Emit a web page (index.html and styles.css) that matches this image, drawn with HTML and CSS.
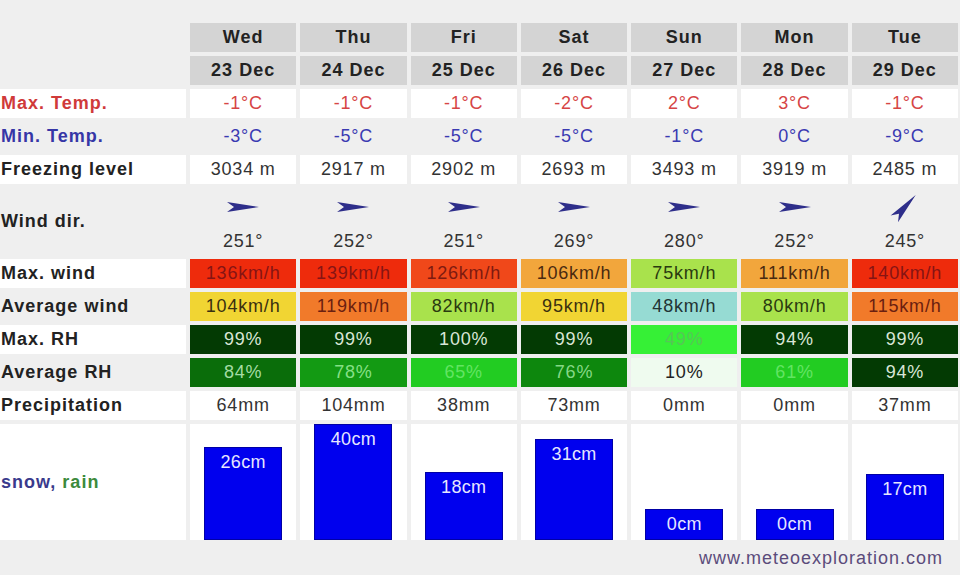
FILE: index.html
```html
<!DOCTYPE html>
<html lang="en">
<head>
    <meta charset="UTF-8">
    <title>Snow forecast</title>
    <link rel="stylesheet" href="styles.css">
</head>
<body>
    <div class="forecast">
        <div class="row head">
            <div></div>
            <div class="cell day">Wed</div>
            <div class="cell day">Thu</div>
            <div class="cell day">Fri</div>
            <div class="cell day">Sat</div>
            <div class="cell day">Sun</div>
            <div class="cell day">Mon</div>
            <div class="cell day">Tue</div>
        </div>
        <div class="row head">
            <div></div>
            <div class="cell day">23 Dec</div>
            <div class="cell day">24 Dec</div>
            <div class="cell day">25 Dec</div>
            <div class="cell day">26 Dec</div>
            <div class="cell day">27 Dec</div>
            <div class="cell day">28 Dec</div>
            <div class="cell day">29 Dec</div>
        </div>

        <div class="row white tmax">
            <div class="label">Max. Temp.</div>
            <div class="cell">-1°C</div>
            <div class="cell">-1°C</div>
            <div class="cell">-1°C</div>
            <div class="cell">-2°C</div>
            <div class="cell">2°C</div>
            <div class="cell">3°C</div>
            <div class="cell">-1°C</div>
        </div>
        <div class="row tmin">
            <div class="label">Min. Temp.</div>
            <div class="cell">-3°C</div>
            <div class="cell">-5°C</div>
            <div class="cell">-5°C</div>
            <div class="cell">-5°C</div>
            <div class="cell">-1°C</div>
            <div class="cell">0°C</div>
            <div class="cell">-9°C</div>
        </div>
        <div class="row white">
            <div class="label">Freezing level</div>
            <div class="cell">3034 m</div>
            <div class="cell">2917 m</div>
            <div class="cell">2902 m</div>
            <div class="cell">2693 m</div>
            <div class="cell">3493 m</div>
            <div class="cell">3919 m</div>
            <div class="cell">2485 m</div>
        </div>

        <div class="row wind">
            <div class="label">Wind dir.</div>
            <div class="cell dir"><svg class="arrow" viewBox="0 0 34 12"><path d="M1 1 L33 6 L1 11 L8 6 Z"/></svg><span>251°</span></div>
            <div class="cell dir"><svg class="arrow" viewBox="0 0 34 12"><path d="M1 1 L33 6 L1 11 L8 6 Z"/></svg><span>252°</span></div>
            <div class="cell dir"><svg class="arrow" viewBox="0 0 34 12"><path d="M1 1 L33 6 L1 11 L8 6 Z"/></svg><span>251°</span></div>
            <div class="cell dir"><svg class="arrow" viewBox="0 0 34 12"><path d="M1 1 L33 6 L1 11 L8 6 Z"/></svg><span>269°</span></div>
            <div class="cell dir"><svg class="arrow" viewBox="0 0 34 12"><path d="M1 1 L33 6 L1 11 L8 6 Z"/></svg><span>280°</span></div>
            <div class="cell dir"><svg class="arrow" viewBox="0 0 34 12"><path d="M1 1 L33 6 L1 11 L8 6 Z"/></svg><span>252°</span></div>
            <div class="cell dir"><svg class="arrow" viewBox="0 0 34 12" style="transform: rotate(-48deg)"><path d="M1 1 L33 6 L1 11 L8 6 Z"/></svg><span>245°</span></div>
        </div>

        <div class="row white">
            <div class="label">Max. wind</div>
            <div class="cell w-red">136km/h</div>
            <div class="cell w-red">139km/h</div>
            <div class="cell w-redorange">126km/h</div>
            <div class="cell w-amber">106km/h</div>
            <div class="cell w-lime">75km/h</div>
            <div class="cell w-amber">111km/h</div>
            <div class="cell w-red">140km/h</div>
        </div>
        <div class="row">
            <div class="label">Average wind</div>
            <div class="cell w-yellow">104km/h</div>
            <div class="cell w-orange">119km/h</div>
            <div class="cell w-lime">82km/h</div>
            <div class="cell w-yellow">95km/h</div>
            <div class="cell w-teal">48km/h</div>
            <div class="cell w-lime">80km/h</div>
            <div class="cell w-orange">115km/h</div>
        </div>
        <div class="row white">
            <div class="label">Max. RH</div>
            <div class="cell rh-90">99%</div>
            <div class="cell rh-90">99%</div>
            <div class="cell rh-90">100%</div>
            <div class="cell rh-90">99%</div>
            <div class="cell rh-40">49%</div>
            <div class="cell rh-90">94%</div>
            <div class="cell rh-90">99%</div>
        </div>
        <div class="row">
            <div class="label">Average RH</div>
            <div class="cell rh-80">84%</div>
            <div class="cell rh-70">78%</div>
            <div class="cell rh-60">65%</div>
            <div class="cell rh-75">76%</div>
            <div class="cell rh-10">10%</div>
            <div class="cell rh-60">61%</div>
            <div class="cell rh-90">94%</div>
        </div>
        <div class="row white">
            <div class="label">Precipitation</div>
            <div class="cell">64mm</div>
            <div class="cell">104mm</div>
            <div class="cell">38mm</div>
            <div class="cell">73mm</div>
            <div class="cell">0mm</div>
            <div class="cell">0mm</div>
            <div class="cell">37mm</div>
        </div>

        <div class="row white snow">
            <div class="label"><span><span class="snow-txt">snow,</span> <span class="rain-txt">rain</span></span></div>
            <div class="cell bars"><div class="bar" style="height: 93px">26cm</div></div>
            <div class="cell bars"><div class="bar" style="height: 116px">40cm</div></div>
            <div class="cell bars"><div class="bar" style="height: 68px">18cm</div></div>
            <div class="cell bars"><div class="bar" style="height: 101px">31cm</div></div>
            <div class="cell bars"><div class="bar" style="height: 31px">0cm</div></div>
            <div class="cell bars"><div class="bar" style="height: 31px">0cm</div></div>
            <div class="cell bars"><div class="bar" style="height: 66px">17cm</div></div>
        </div>
    </div>

    <div class="credit">www.meteoexploration.com</div>
</body>
</html>
```

FILE: styles.css
```css
body {
    margin: 0;
    padding-top: 23px;
    width: 960px;
    background-color: #efefef;
    font-family: "Liberation Sans", Arial, sans-serif;
    font-size: 18px;
    letter-spacing: 0.8px;
    color: #333;
    overflow: hidden;
}

.forecast {
    display: flex;
    flex-direction: column;
    gap: 4px;
    width: 958px;
}

.row {
    display: grid;
    grid-template-columns: 186px repeat(7, 1fr);
    column-gap: 4px;
    height: 29px;
}

.white > div {
    background-color: #fff;
}

.label {
    padding-left: 1px;
    font-weight: bold;
    color: #222;
    letter-spacing: 1px;
    display: flex;
    align-items: center;
}

.cell {
    display: flex;
    align-items: center;
    justify-content: center;
}

.head .day {
    background-color: #d4d4d4;
    font-weight: bold;
    color: #222;
    letter-spacing: 1px;
}

/* temperatures */
.tmax .label { color: #d03a3a; }
.tmax .cell { color: #d64545; }
.tmin .label { color: #3636a6; }
.tmin .cell { color: #3a3ab2; }

/* wind direction */
.row.wind {
    height: 67px;
}

.dir {
    flex-direction: column;
    justify-content: flex-start;
    padding-top: 13px;
}

.arrow {
    display: block;
    width: 34px;
    height: 12px;
    fill: #2e2e8a;
}

.dir span {
    margin-top: 17px;
    line-height: 22px;
}

/* wind speed colours */
.row .w-red { background-color: #ee2b0c; color: #861414; }
.row .w-redorange { background-color: #f0481a; color: #7e1a10; }
.row .w-amber { background-color: #f2a63c; color: #4a2a10; }
.row .w-orange { background-color: #f17a2a; color: #6a2010; }
.row .w-yellow { background-color: #f1d533; color: #3a3010; }
.row .w-lime { background-color: #a9e24c; color: #2a3a10; }
.row .w-teal { background-color: #96dbd3; color: #233; }

/* humidity colours */
.row .rh-90 { background-color: #033a03; color: #d9e6d6; }
.row .rh-80 { background-color: #0a6d0a; color: #a4dca4; }
.row .rh-75 { background-color: #0d870d; color: #86d886; }
.row .rh-70 { background-color: #139a13; color: #86e086; }
.row .rh-60 { background-color: #22cc22; color: #62e462; }
.row .rh-40 { background-color: #36f036; color: #56c656; }
.row .rh-10 { background-color: #effbef; color: #222; }

/* snow bars */
.row.snow {
    height: 116px;
}

.snow-txt { color: #3a3a8c; }
.rain-txt { color: #3c8a3c; }

.bars {
    align-items: flex-end;
}

.bar {
    box-sizing: border-box;
    width: 78px;
    padding-top: 4px;
    line-height: 20px;
    text-align: center;
    background-color: #0000ee;
    border: 1px solid #0000a6;
    color: #e6e6ff;
    letter-spacing: 0.3px;
}

.credit {
    height: 35px;
    line-height: 37px;
    padding-right: 17px;
    text-align: right;
    color: #5b4b7b;
    letter-spacing: 1px;
}
```
